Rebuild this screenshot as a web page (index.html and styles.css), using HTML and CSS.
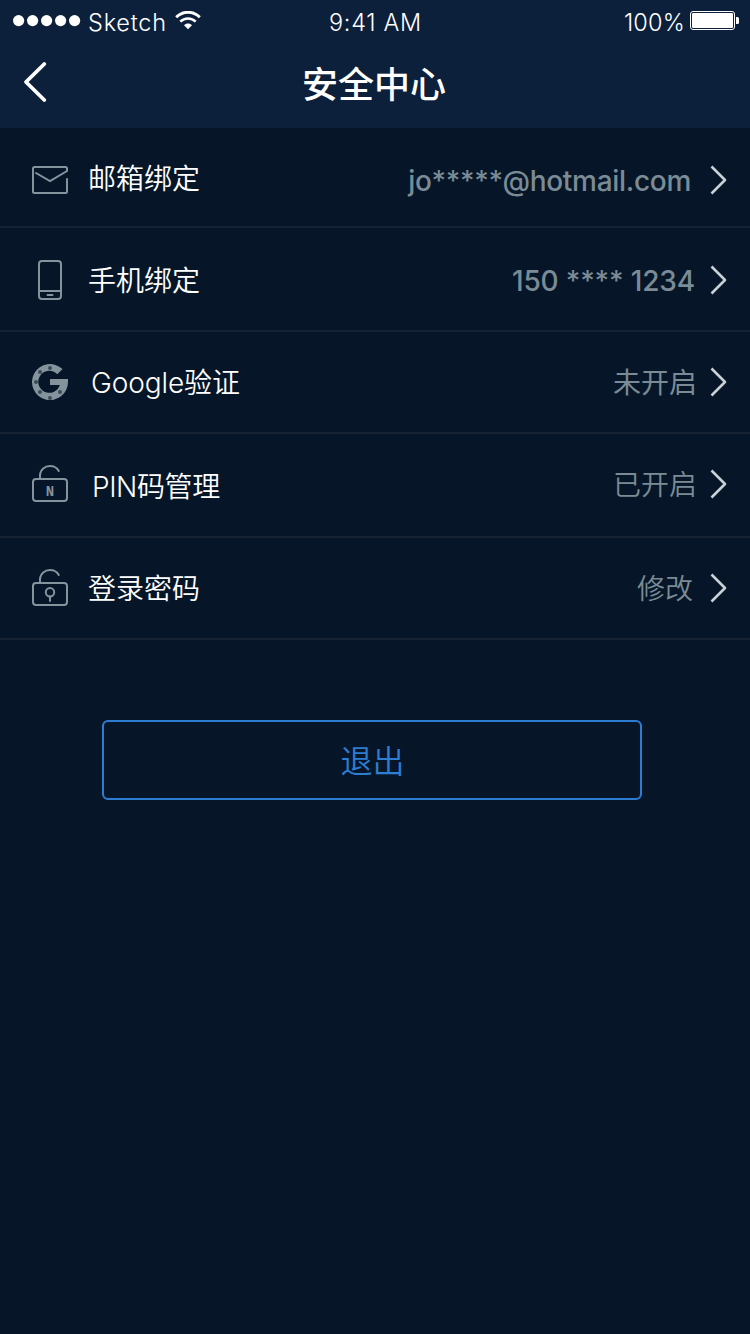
FILE: index.html
```html
<!DOCTYPE html>
<html lang="zh-CN">
<head>
<meta charset="utf-8">
<title>安全中心</title>
<link rel="stylesheet" href="styles.css">
</head>
<body>
<header class="header">
  <div class="status">
    <div class="status-left">
      <svg class="dots" width="68" height="12" viewBox="0 0 68 12" fill="#fff"><circle cx="5.6" cy="5.6" r="5.6"/><circle cx="19.6" cy="5.6" r="5.6"/><circle cx="33.6" cy="5.6" r="5.6"/><circle cx="47.6" cy="5.6" r="5.6"/><circle cx="61.6" cy="5.6" r="5.6"/></svg>
      <span class="carrier">Sketch</span>
      <svg class="wifi" width="26" height="19" viewBox="0 0 26 19" fill="none" stroke="#fff"><path d="M1.2 6.2C7.8-.4 18.2-.4 24.8 6.2" stroke-width="2.8"/><path d="M5.3 10.6C9.7 6.4 16.3 6.4 20.7 10.6" stroke-width="2.6"/><path d="M13 18.2L9 14.2C11.2 12 14.8 12 17 14.2Z" fill="#fff" stroke="none"/></svg>
    </div>
    <span class="time">9:41 AM</span>
    <div class="status-right">
      <span class="percent">100%</span>
      <svg class="battery" width="50" height="20" viewBox="0 0 50 20"><rect x=".5" y=".5" width="44" height="18" rx="2.5" fill="none" stroke="#fff"/><rect x="2" y="2" width="41" height="15" rx="1.2" fill="#fff"/><path d="M46 6h1.5q1.5 0 1.5 1.5v4q0 1.5-1.5 1.5H46z" fill="#fff"/></svg>
    </div>
  </div>
  <nav class="nav">
    <svg class="back" width="26" height="42" viewBox="0 0 26 42" fill="none" stroke="#fff" stroke-width="3.8" stroke-linecap="round" stroke-linejoin="round"><path d="M22.300 3L4 21L22.300 39"/></svg>
    <h1 class="title">安全中心</h1>
  </nav>
</header>
<main>
  <ul class="list">
    <li class="row row-mail">
      <svg class="icon" width="40" height="44" viewBox="0 0 40 44"><path d="M37 21V33.500Q37 35 35.500 35H4.500Q3 35 3 33.500V10.500Q3 9 4.500 9H35.500Q37 9 37 10.500V13L20 23L6 15"/></svg>
      <span class="label">邮箱绑定</span>
      <span class="value latin">jo*****@hotmail.com</span>
      <svg class="chevron" width="20" height="32" viewBox="0 0 20 32"><path d="M2.500 2.500L16 16L2.500 29.500"/></svg>
    </li>
    <li class="row row-phone">
      <svg class="icon" width="40" height="44" viewBox="0 0 40 44"><rect x="9" y="3" width="22" height="38" rx="3"/><path d="M9 33H31M17.500 37H22.500"/></svg>
      <span class="label">手机绑定</span>
      <span class="value latin">150 **** 1234</span>
      <svg class="chevron" width="20" height="32" viewBox="0 0 20 32"><path d="M2.500 2.500L16 16L2.500 29.500"/></svg>
    </li>
    <li class="row row-google">
      <svg class="icon" width="40" height="44" viewBox="0 0 40 44"><path class="solid" d="M32.500 9.100L27.300 14.300A11 11 0 1 0 29.800 25H20V19H38V22A18 18 0 1 1 32.500 9.100Z"/><g class="hole"><circle cx="20" cy="8" r="2"/><circle cx="10" cy="12" r="2"/><circle cx="6" cy="22" r="2"/><circle cx="10" cy="32" r="2"/><circle cx="20" cy="38" r="2"/><circle cx="30" cy="32" r="2"/></g></svg>
      <span class="label">Google验证</span>
      <span class="value medium">未开启</span>
      <svg class="chevron" width="20" height="32" viewBox="0 0 20 32"><path d="M2.500 2.500L16 16L2.500 29.500"/></svg>
    </li>
    <li class="row row-pin">
      <svg class="icon" width="40" height="44" viewBox="0 0 40 44"><rect x="3" y="16" width="34" height="22" rx="3"/><path d="M10.200 16C8.500 6 16 3 20 3Q26 3 28.800 8"/><text x="20" y="33" text-anchor="middle">N</text></svg>
      <span class="label">PIN码管理</span>
      <span class="value">已开启</span>
      <svg class="chevron" width="20" height="32" viewBox="0 0 20 32"><path d="M2.500 1.500L16 15L2.500 28.500"/></svg>
    </li>
    <li class="row row-password">
      <svg class="icon" width="40" height="44" viewBox="0 0 40 44"><rect x="3" y="17" width="34" height="22" rx="3"/><path d="M10.200 17C8.500 7 16 4 20 4Q26 4 28.800 9M20 30.500V35"/><circle cx="20" cy="26.300" r="4.200"/></svg>
      <span class="label">登录密码</span>
      <span class="value">修改</span>
      <svg class="chevron" width="20" height="32" viewBox="0 0 20 32"><path d="M2.500 2.500L16 16L2.500 29.500"/></svg>
    </li>
  </ul>
  <button class="logout" type="button">退出</button>
</main>
</body>
</html>
```
FILE: styles.css
```css
* { box-sizing: border-box; }
body {
  margin: 0;
  min-height: 1334px;
  background: #061628;
  color: #fff;
  font-family: Inter, "Noto Sans CJK SC", sans-serif;
}
svg { display: block; flex: none; }
.header { height: 128px; background: #0d203b; }
.status {
  height: 40px;
  display: grid;
  grid-template-columns: 1fr auto 1fr;
  padding: 0 10px 0 13px;
  font-size: 23.5px;
  font-weight: 350;
  line-height: 46px;
}
.status-left, .status-right { display: flex; align-items: flex-start; }
.status-right { justify-content: flex-end; }
.dots { margin-top: 15px; }
.carrier { margin-left: 7px; width: 87px; letter-spacing: 0.8px; }
.wifi { margin-top: 11px; }
.time { margin-left: -2px; letter-spacing: 0.7px; }
.percent { margin-right: 5px; letter-spacing: 0.2px; }
.battery { margin-top: 11px; }
.nav {
  height: 88px;
  display: grid;
  grid-template-columns: 1fr auto 1fr;
  padding: 0 20px;
}
.back { margin: 21px 0 0 2px; }
.title { margin: 0 0 0 -2px; font-size: 36px; font-weight: 500; line-height: 90px; }
.list { margin: 0; padding: 0; list-style: none; }
.row {
  display: flex;
  align-items: center;
  height: 104px;
  padding: 0 21px 0 30px;
  border-bottom: 2px solid #162131;
  font-size: 28px;
  line-height: 40px;
  white-space: nowrap;
}
.row-mail { height: 100px; padding-top: 6px; }
.row-phone { padding-top: 2px; }
.row-google, .row-password { height: 102px; }
.icon { fill: none; stroke: #84939c; stroke-width: 2; stroke-linecap: round; }
.icon .solid { fill: #84939c; stroke: none; }
.icon .hole { fill: #3d4c58; stroke: none; }
.icon text { fill: #84939c; stroke: none; font: bold 14px "Liberation Mono", monospace; }
.label { margin-left: 18px; padding-top: 2px; font-weight: 350; }
.row-mail .label { padding: 0 0 2px; }
.row-google .label { margin-left: 21px; letter-spacing: -0.1px; }
.row-pin .label { margin-left: 22px; padding-top: 4px; letter-spacing: -0.4px; }
.value { margin: 0 12px 0 auto; color: #7b8b95; font-weight: 350; }
.latin { font-weight: 500; padding-top: 2px; }
.row-mail .latin { margin-right: 18px; letter-spacing: -0.3px; }
.row-phone .latin { margin-right: 14px; letter-spacing: -0.15px; }
.medium { font-weight: 400; padding-top: 2px; }
.row-password .value { margin-right: 16px; padding-top: 2px; }
.chevron { fill: none; stroke: #c9d0d6; stroke-width: 2.6; stroke-linejoin: round; }
.logout {
  display: block;
  width: 540px;
  height: 80px;
  margin: 80px 0 0 102px;
  padding: 0 0 2px 1px;
  border: 2px solid #2d7dd2;
  border-radius: 6px;
  background: transparent;
  color: #2d7dd2;
  font: 350 32px/74px "Noto Sans CJK SC", sans-serif;
}
```
